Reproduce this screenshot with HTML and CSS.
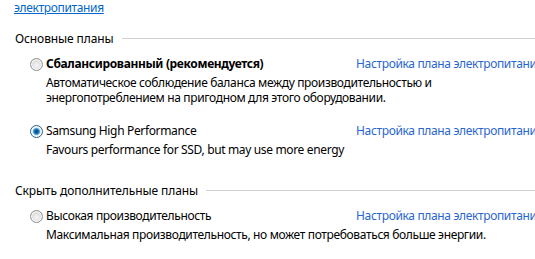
FILE: index.html
```html
<!DOCTYPE html>
<html lang="ru">
<head>
  <meta charset="UTF-8" />
  <title>Электропитание</title>
  <link rel="stylesheet" href="styles.css">
</head>
<body>

<div class="intro">
  <span class="intro-lead">выберите план и настройте его, изменив параметры электропитания.</span><a href="#">Дополнительные сведения о планах<br>электропитания</a>
</div>

<div class="group">
  <div class="group-title">Основные планы</div>

  <div class="plan">
    <span class="radio"></span>
    <span class="plan-name bold">Сбалансированный (рекомендуется)</span>
    <a class="plan-link" href="#">Настройка плана электропитания</a>
    <div class="plan-desc">
      Автоматическое соблюдение баланса между производительностью и<br>
      энергопотреблением на пригодном для этого оборудовании.
    </div>
  </div>

  <div class="plan">
    <span class="radio checked"></span>
    <span class="plan-name">Samsung High Performance</span>
    <a class="plan-link" href="#">Настройка плана электропитания</a>
    <div class="plan-desc">Favours performance for SSD, but may use more energy</div>
  </div>
</div>

<div class="group">
  <div class="group-title">Скрыть дополнительные планы</div>

  <div class="plan">
    <span class="radio"></span>
    <span class="plan-name">Высокая производительность</span>
    <a class="plan-link" href="#">Настройка плана электропитания</a>
    <div class="plan-desc">Максимальная производительность, но может потребоваться больше энергии.</div>
  </div>
</div>

</body>
</html>
```

FILE: styles.css
```css
html, body {
  margin: 0;
  padding: 0;
  background: #fff;
  overflow: hidden;
}

body {
  width: 620px;
  font-family: 'Noto Sans', sans-serif;
  font-size: 12px;
  line-height: 15px;
  letter-spacing: -0.35px;
  color: #000;
}

a {
  color: #0066cc;
  text-decoration: none;
}

.intro {
  margin: -15px 0 0 14px;
  white-space: nowrap;
  color: #333;
}

.intro a {
  text-decoration: underline;
}

.intro-lead {
  display: inline-block;
  width: 293px;
  overflow: hidden;
  vertical-align: top;
}

.group {
  margin-top: 16px;
}

.group + .group {
  margin-top: 26px;
}

.group-title {
  display: flex;
  align-items: center;
  padding-left: 15px;
  margin-bottom: 10px;
  letter-spacing: -0.1px;
}

.group-title::after {
  content: "";
  flex: 1;
  height: 1px;
  margin-left: 8px;
  margin-top: -1px;
  background: #d0d0d0;
}

.plan {
  display: grid;
  grid-template-columns: 16px 310px max-content;
  padding-left: 30px;
}

.plan + .plan {
  margin-top: 18px;
}

.plan-name.bold {
  font-weight: 700;
}

.plan-link {
  white-space: nowrap;
  color: #2a66d0;
}

.plan-desc {
  grid-column: 2 / 4;
  margin-top: 4px;
}

.radio {
  width: 11px;
  height: 11px;
  margin-top: 2px;
  border-radius: 50%;
  border: 1px solid #8f8f8f;
  background: radial-gradient(circle at 50% 60%, #f4f4f4 0, #e0e0e0 55%, #cfcfcf 100%);
  box-shadow: inset 0 0 0 1px #fafafa;
}

.radio.checked {
  border-color: #2c628b;
  background: radial-gradient(circle at 50% 50%, #0a3d6b 0, #1a6fb0 28%, #5fb6ea 42%, #dfe9f2 50%, #eef3f8 100%);
}
```
